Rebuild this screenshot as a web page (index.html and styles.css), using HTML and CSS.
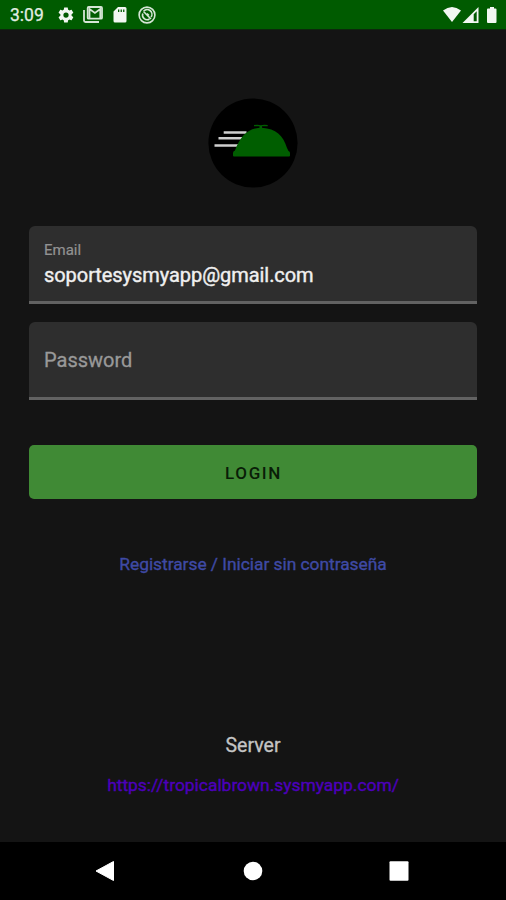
FILE: index.html
```html
<!DOCTYPE html>
<html lang="es">
<head>
<meta charset="utf-8">
<title>Login</title>
<link rel="stylesheet" href="styles.css">
</head>
<body>
<header class="status">
  <span class="clock">3:09</span>
  <svg class="gear" width="18" height="18" viewBox="0 0 24 24"><path fill-rule="evenodd" d="M19.4 13c0-.3.1-.6.1-1s0-.7-.1-1l2.1-1.6c.2-.2.3-.4.1-.7l-2-3.4c-.1-.2-.4-.3-.6-.2l-2.5 1c-.5-.4-1.1-.7-1.700-1l-.4-2.600c0-.3-.2-.5-.5-.5h-4c-.2 0-.4.2-.5.5L9 5.100c-.6.3-1.100.6-1.700 1l-2.500-1c-.2-.1-.5 0-.6.2l-2 3.400c-.1.3 0 .5.200.7L4.500 11v2l-2.100 1.600c-.2.2-.3.4-.2.7l2 3.400c.1.2.4.3.6.2l2.500-1c.5.4 1.100.7 1.700 1l.4 2.600c0 .3.2.5.5.5h4c.2 0 .5-.2.5-.5l.4-2.600c.6-.3 1.200-.6 1.700-1l2.500 1c.2.1.5 0 .6-.2l2-3.400c.1-.3.1-.5-.1-.7zM12 15.500a3.500 3.500 0 1 1 0-7 3.500 3.500 0 0 1 0 7z"/></svg>
  <svg class="mail" width="20" height="17" viewBox="0 0 20 17"><path d="M1 4v10.500q0 1.500 1.500 1.500H16" class="line"/><rect x="4.700" y="1" width="14.300" height="11.700" rx="1" class="line"/><path d="M6.500 12V3l5.400 4 5.400-4V12" class="line"/></svg>
  <svg class="sd" width="14" height="16" viewBox="0 0 14 16"><path fill-rule="evenodd" d="M5 0h7q1.500 0 1.500 1.500v12.500q0 1.500-1.500 1.500H2Q.5 15.500.5 14V4.500zM5 2.500V5h1.300V2.500zm2.600 0V5h1.300V2.500zm2.500 0V5h1.300V2.500z"/></svg>
  <svg class="sync" width="18" height="18" viewBox="0 0 18 18"><circle cx="9" cy="9" r="7.900" class="line"/><path d="M5.500 5.500a4.600 4.600 0 0 1 7.500 5.500M11.500 13A4.600 4.600 0 0 1 4.800 7.500M5.500 5.500l7.500 7.500M9 7.500l2 2" class="line"/></svg>
  <svg class="signals" width="56" height="18" viewBox="0 0 56 18"><path d="M1 4.500Q10 -2.500 19 4.500L10 16z"/><path fill-rule="evenodd" d="M36.500 1v16h-16zM34.700 5.300v9.900h-3V8.300z"/><path d="M48 1h4v1.500h1.500q1 0 1 1v12.500q0 1-1 1h-7.500q-1 0-1-1V3.500q0-1 1-1h2z"/></svg>
</header>
<main>
  <svg class="logo" width="90" height="90" viewBox="0 0 90 90"><circle cx="45" cy="45" r="44.600"/><path class="speed" d="M15.700 34.500H38.500M10.500 40.300H34M6.500 47.500H30"/><path class="cloche" d="M46 27q4-.8 6.700.2 3-1 7-.2v1.200h-5.700v1.600C68 31 75 37 79 50L80.500 53q1.500.5 1.500 2v2.500q0 1-1 1H26q-1 0-1-1V55q0-1.700 2-2.500C32 39 39 31 51.500 29.800v-1.600H46z"/></svg>
  <form>
    <label class="field filled"><span class="caption">Email</span><span class="value">soportesysmyapp@gmail.com</span></label>
    <label class="field"><span class="placeholder">Password</span></label>
    <button type="button"><span>LOGIN</span></button>
  </form>
  <a class="register">Registrarse / Iniciar sin contraseña</a>
  <div class="server">Server</div>
  <a class="url">https://tropicalbrown.sysmyapp.com/</a>
</main>
<nav>
  <svg width="20" height="22" viewBox="0 0 20 22"><path d="M18.500 1.500v19L1 11z" class="shape"/></svg>
  <svg width="20" height="22" viewBox="0 0 20 22"><circle cx="10" cy="11" r="9.300"/></svg>
  <svg width="20" height="22" viewBox="0 0 20 22"><rect x=".5" y="1.300" width="19" height="19.400" rx="1"/></svg>
</nav>
</body>
</html>
```
FILE: styles.css
```css
* { box-sizing: border-box; }
body { margin: 0; width: 506px; height: 900px; display: flex; flex-direction: column; overflow: hidden; background: #141414; font-family: Roboto, sans-serif; color: #fff; }
.status { height: 30px; background: #005b00; border-bottom: 1px solid #0c280c; display: flex; align-items: center; padding: 0 8px 0 9px; fill: #f2f7f2; }
.clock { width: 48px; font-size: 17.5px; line-height: 30px; color: #e3eee3; padding: 1px 0 0 1px; -webkit-text-stroke: .25px; }
.line { fill: none; stroke: #d5e5d5; stroke-width: 1.8; }
.sync .line { stroke-width: 1.6; }
.mail { margin-left: 8px; }
.sd { margin-left: 10px; }
.sync { margin-left: 11px; }
.signals { margin-left: auto; }
main { height: 812px; padding: 68px 29px 0; display: flex; flex-direction: column; align-items: center; }
.logo { flex: none; }
.speed { stroke: #cfcfcf; stroke-width: 2.4; }
.cloche { fill: #005e00; }
form { width: 448px; margin-top: 38px; }
.field { display: flex; flex-direction: column; height: 78px; margin-bottom: 18px; padding: 0 15px; background: #2e2e2e; border-bottom: 3px solid #626262; border-radius: 6px 6px 0 0; justify-content: center; }
.filled { justify-content: flex-start; padding-top: 14px; }
.caption { font-size: 15px; line-height: 20px; color: #929292; -webkit-text-stroke: .2px; }
.value { font-size: 20px; line-height: 31px; color: #f0f0f0; letter-spacing: -.06px; -webkit-text-stroke: .4px; }
.placeholder { font-size: 20px; line-height: 24px; padding-top: 1px; color: #999; -webkit-text-stroke: .3px; }
button { display: block; width: 100%; height: 54px; margin-top: 45px; padding: 2px 0 0 1px; border: 0; border-radius: 5px; background: #408a35; color: #091d07; font: 500 17px Roboto, sans-serif; letter-spacing: 1.6px; }
.register { margin-top: 54px; font-size: 17.4px; line-height: 22px; letter-spacing: -.04px; color: #3f4aa5; -webkit-text-stroke: .35px; }
.server { margin-top: 158px; font-size: 19.5px; line-height: 26px; color: #c4c4c4; -webkit-text-stroke: .3px; }
.url { margin-top: 14px; font-size: 17.4px; line-height: 24px; color: #4c00ba; -webkit-text-stroke: .4px; }
nav { height: 58px; background: #000; display: flex; justify-content: space-between; align-items: center; padding: 0 97px 0 95px; fill: #fff; }
nav svg:nth-child(2) { margin-left: 2px; }
.shape { stroke: #fff; stroke-linejoin: round; }
```
